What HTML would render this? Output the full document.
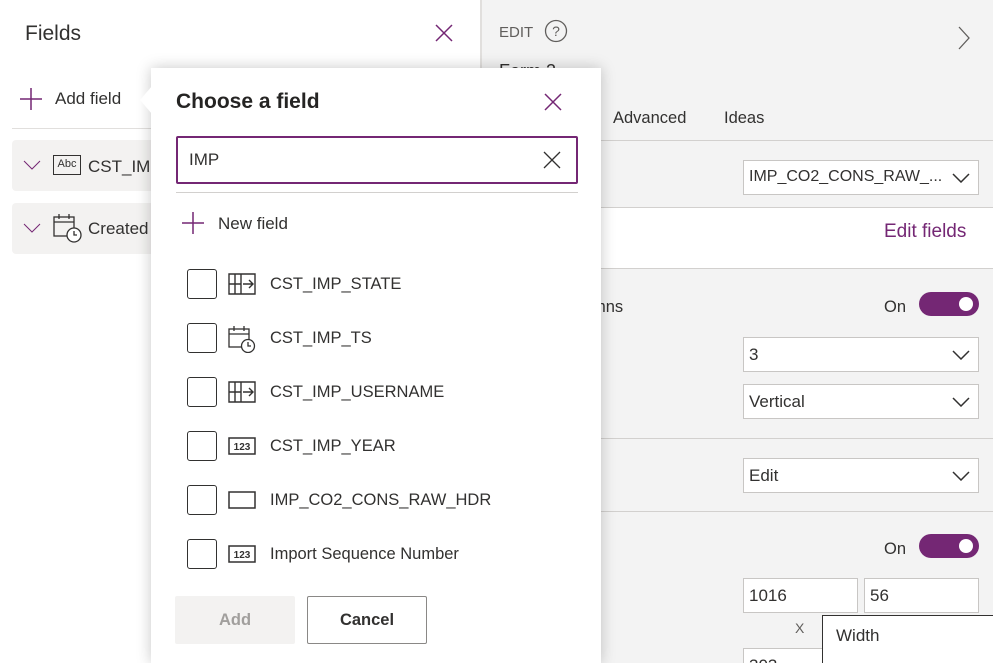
<!DOCTYPE html>
<html><head><meta charset="utf-8"><style>
*{box-sizing:border-box;margin:0;padding:0}
body{width:993px;height:663px;overflow:hidden;position:relative;background:#fff;font-family:"Liberation Sans",sans-serif;color:#323130;font-size:16px}
.a{position:absolute}
.right{left:480px;top:0;width:513px;height:663px;background:#f3f3f3;border-left:2px solid #e1dfdd;overflow:hidden}
.hl{position:absolute;height:1px;background:#d2d0ce}
.dd{position:absolute;background:#fff;border:1px solid #c8c6c4;height:35px;font-size:17px;padding:7px 5px;color:#323130}
.dd svg{position:absolute;right:8px;top:12px}
.tog{position:absolute;width:60px;height:24px;border-radius:12px;background:#742774}
.tog:after{content:"";position:absolute;right:6px;top:5px;width:14px;height:14px;border-radius:7px;background:#fff}
.pop{left:151px;top:68px;width:450px;height:595px;background:#fff;box-shadow:0 0 14px rgba(0,0,0,.22)}
.cb{position:absolute;left:36px;width:30px;height:30px;border:1px solid #323130;border-radius:3px}
.row{position:absolute;left:0;width:450px;height:30px}
.row .t{position:absolute;left:119px;top:6px;font-size:16.5px}
.row svg{position:absolute;left:77px;top:2px}
</style></head><body>
<div class="a" style="left:25px;top:22px;font-size:21px">Fields</div>
<svg class="a" style="left:435px;top:24px" width="18" height="18"><path d="M1 1L17 17M17 1L1 17" stroke="#742774" stroke-width="1.5"/></svg>
<svg class="a" style="left:19px;top:87px" width="24" height="24"><path d="M12 1V23M1 12H23" stroke="#742774" stroke-width="1.5"/></svg>
<div class="a" style="left:55px;top:89px;font-size:17px">Add field</div>
<div class="hl" style="left:12px;top:128px;width:140px;background:#e1dfdd"></div>
<div class="a" style="left:12px;top:140px;width:150px;height:51px;background:#f3f2f1;border-radius:4px"></div>
<div class="a" style="left:12px;top:203px;width:150px;height:51px;background:#f3f2f1;border-radius:4px"></div>
<svg class="a" style="left:23px;top:160px" width="18" height="10"><path d="M1 1L9 9L17 1" stroke="#742774" fill="none"/></svg>
<svg class="a" style="left:23px;top:223px" width="18" height="10"><path d="M1 1L9 9L17 1" stroke="#742774" fill="none"/></svg>
<div class="a" style="left:53px;top:155px;width:28px;height:20px;border:1.5px solid #323130;font-size:11px;text-align:center;line-height:17px">Abc</div>
<div class="a" style="left:88px;top:157px;font-size:17px">CST_IMP</div>
<svg class="a" style="left:53px;top:213px" width="30" height="30"><rect x="1" y="4" width="20" height="19" fill="none" stroke="#323130" stroke-width="1.3"/><path d="M1 9H21M6 1V6M16 1V6" stroke="#323130" stroke-width="1.3"/><circle cx="21" cy="22" r="7" fill="#fff" stroke="#323130" stroke-width="1.3"/><path d="M21 18V22H24" stroke="#323130" fill="none" stroke-width="1.3"/></svg>
<div class="a" style="left:88px;top:219px;font-size:17px">Created</div>
<div class="a right">
<div class="a" style="left:17px;top:24px;font-size:15px;color:#605e5c">EDIT</div>
<svg class="a" style="left:62px;top:19px" width="24" height="24"><circle cx="12" cy="12" r="10.5" fill="none" stroke="#605e5c" stroke-width="1.3"/><text x="12" y="17" font-size="14" text-anchor="middle" fill="#605e5c" font-family="Liberation Sans">?</text></svg>
<div class="a" style="left:17px;top:61px;font-size:18px">Form 2</div>
<svg class="a" style="left:476px;top:26px" width="12" height="24"><path d="M1 1L11 12L1 23" stroke="#605e5c" fill="none" stroke-width="1.3"/></svg>
<div class="a" style="left:131px;top:109px;font-size:16.5px">Advanced</div>
<div class="a" style="left:242px;top:109px;font-size:16.5px">Ideas</div>
<div class="hl" style="left:0;top:140px;width:513px"></div>
<div class="dd" style="left:261px;top:160px;width:236px;font-size:16px">IMP_CO2_CONS_RAW_...<svg width="18" height="10"><path d="M1 1L9 9L17 1" stroke="#323130" fill="none" stroke-width="1.5"/></svg></div>
<div class="hl" style="left:0;top:207px;width:513px"></div>
<div class="a" style="left:0;top:208px;width:513px;height:60px;background:#fff"></div>
<div class="a" style="left:402px;top:221px;font-size:19px;color:#742774">Edit fields</div>
<div class="hl" style="left:0;top:268px;width:513px"></div>
<div class="a" style="left:110px;top:298px;font-size:16.5px">mns</div>
<div class="a" style="left:402px;top:298px;font-size:16.5px">On</div>
<div class="tog" style="left:437px;top:292px"></div>
<div class="dd" style="left:261px;top:337px;width:236px">3<svg width="18" height="10"><path d="M1 1L9 9L17 1" stroke="#323130" fill="none" stroke-width="1.5"/></svg></div>
<div class="dd" style="left:261px;top:384px;width:236px">Vertical<svg width="18" height="10"><path d="M1 1L9 9L17 1" stroke="#323130" fill="none" stroke-width="1.5"/></svg></div>
<div class="hl" style="left:0;top:438px;width:513px"></div>
<div class="dd" style="left:261px;top:458px;width:236px">Edit<svg width="18" height="10"><path d="M1 1L9 9L17 1" stroke="#323130" fill="none" stroke-width="1.5"/></svg></div>
<div class="hl" style="left:0;top:511px;width:513px"></div>
<div class="a" style="left:402px;top:540px;font-size:16.5px">On</div>
<div class="tog" style="left:437px;top:534px"></div>
<div class="dd" style="left:261px;top:578px;width:115px">1016</div>
<div class="dd" style="left:382px;top:578px;width:115px">56</div>
<div class="a" style="left:313px;top:620px;font-size:14px;color:#605e5c">X</div>
<div class="dd" style="left:261px;top:648px;width:115px">303</div>
<div class="a" style="left:340px;top:615px;width:175px;height:50px;background:#fff;border:1px solid #323130"></div>
<div class="a" style="left:354px;top:626px;font-size:17px">Width</div>
</div>
<div class="a pop">
<svg class="a" style="left:-11px;top:18px" width="14" height="28"><path d="M12 0L0 14L12 28Z" fill="#fff"/></svg>
<div class="a" style="left:25px;top:22px;font-size:21px;font-weight:bold;color:#252423">Choose a field</div>
<svg class="a" style="left:393px;top:25px" width="18" height="18"><path d="M1 1L17 17M17 1L1 17" stroke="#742774" stroke-width="1.5"/></svg>
<div class="a" style="left:25px;top:68px;width:402px;height:48px;border:2px solid #742774;border-radius:2px"></div>
<div class="a" style="left:38px;top:82px;font-size:17px">IMP</div>
<svg class="a" style="left:392px;top:83px" width="18" height="18"><path d="M1 1L17 17M17 1L1 17" stroke="#323130" stroke-width="1.3"/></svg>
<div class="hl" style="left:25px;top:124px;width:402px;background:#d2d0ce"></div>
<svg class="a" style="left:30px;top:143px" width="24" height="24"><path d="M12 1V23M1 12H23" stroke="#742774" stroke-width="1.5"/></svg>
<div class="a" style="left:67px;top:146px;font-size:17px">New field</div>
<div class="row" style="top:201px"><div class="cb"></div><svg width="30" height="26"><path d="M1 3H27V23H1Z M1 13H13 M7 3V23 M13 3V23" stroke="#323130" fill="none" stroke-width="1.4"/><path d="M15 13H25M21 9L25 13L21 17" stroke="#323130" fill="none" stroke-width="1.4"/></svg><div class="t">CST_IMP_STATE</div></div>
<div class="row" style="top:255px"><div class="cb"></div><svg width="30" height="28"><rect x="1" y="4" width="20" height="18" fill="none" stroke="#323130" stroke-width="1.3"/><path d="M1 9H21M6 1V6M16 1V6" stroke="#323130" stroke-width="1.3"/><circle cx="20" cy="21" r="6.5" fill="#fff" stroke="#323130" stroke-width="1.3"/><path d="M20 17V21H23" stroke="#323130" fill="none" stroke-width="1.3"/></svg><div class="t">CST_IMP_TS</div></div>
<div class="row" style="top:309px"><div class="cb"></div><svg width="30" height="26"><path d="M1 3H27V23H1Z M1 13H13 M7 3V23 M13 3V23" stroke="#323130" fill="none" stroke-width="1.4"/><path d="M15 13H25M21 9L25 13L21 17" stroke="#323130" fill="none" stroke-width="1.4"/></svg><div class="t">CST_IMP_USERNAME</div></div>
<div class="row" style="top:363px"><div class="cb"></div><svg width="30" height="26"><rect x="1" y="5" width="26" height="16" fill="none" stroke="#323130" stroke-width="1.5"/><text x="14" y="17" font-size="10" font-weight="bold" text-anchor="middle" fill="#323130" font-family="Liberation Sans">123</text></svg><div class="t">CST_IMP_YEAR</div></div>
<div class="row" style="top:417px"><div class="cb"></div><svg width="30" height="26"><rect x="1" y="5" width="26" height="16" fill="none" stroke="#323130" stroke-width="1.5"/></svg><div class="t">IMP_CO2_CONS_RAW_HDR</div></div>
<div class="row" style="top:471px"><div class="cb"></div><svg width="30" height="26"><rect x="1" y="5" width="26" height="16" fill="none" stroke="#323130" stroke-width="1.5"/><text x="14" y="17" font-size="10" font-weight="bold" text-anchor="middle" fill="#323130" font-family="Liberation Sans">123</text></svg><div class="t">Import Sequence Number</div></div>
<div class="a" style="left:24px;top:528px;width:120px;height:48px;background:#f3f2f1;border-radius:2px;color:#a19f9d;font-weight:bold;text-align:center;line-height:48px;font-size:16.5px">Add</div>
<div class="a" style="left:156px;top:528px;width:120px;height:48px;border:1px solid #8a8886;border-radius:2px;font-weight:bold;text-align:center;line-height:46px;font-size:16.5px">Cancel</div>
</div>
</body></html>
